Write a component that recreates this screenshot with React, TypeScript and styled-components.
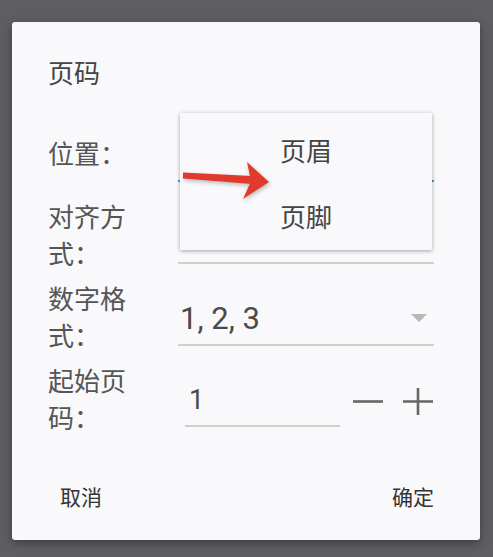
import React from 'react';
import styled, { createGlobalStyle } from 'styled-components';

const GlobalStyle = createGlobalStyle`
  html, body {
    margin: 0;
    padding: 0;
    background: #5e5d60;
  }
  body {
    font-family: "Roboto", "Noto Sans CJK SC", sans-serif;
  }
`;

const Screen = styled.div`
  width: 493px;
  height: 557px;
  box-sizing: border-box;
  padding: 22px 13px 17px 12px;
  background: #5e5d60;
`;

const Dialog = styled.div`
  position: relative;
  width: 468px;
  height: 518px;
  box-sizing: border-box;
  padding: 34px 46px 0 36px;
  background: #f9f8fa;
  border-radius: 3px;
  box-shadow: 0 3px 8px rgba(0, 0, 0, .35);
`;

const Title = styled.h2`
  margin: 0 0 22px;
  font-size: 26px;
  font-weight: 400;
  line-height: 36px;
  color: #444;
`;

const Form = styled.div`
  display: grid;
  grid-template-columns: 130px 1fr;
  grid-auto-rows: 82px;
`;

const Label = styled.div`
  align-self: center;
  width: 90px;
  font-size: 26px;
  line-height: 37px;
  color: #555;
`;

const Field = styled.div<{ focused?: boolean }>`
  align-self: center;
  display: flex;
  align-items: center;
  height: 52px;
  border-bottom: 2px solid ${(props) => (props.focused ? '#2aa7c8' : '#cfcfcf')};
`;

const Value = styled.span`
  flex: 1;
  padding-left: 2px;
  font-size: 31px;
  color: #4a4a4a;
`;

const Caret = styled.span`
  margin-right: 7px;
  border-left: 8.5px solid transparent;
  border-right: 8.5px solid transparent;
  border-top: 8px solid #b8b8b8;
`;

const Stepper = styled.div`
  align-self: center;
  display: flex;
  align-items: center;
  padding-left: 7px;
`;

const NumberInput = styled.div`
  display: flex;
  align-items: center;
  width: 155px;
  height: 52px;
  padding-left: 4px;
  box-sizing: border-box;
  border-bottom: 2px solid #cfcfcf;
  font-size: 27px;
  color: #4a4a4a;
`;

const StepButton = styled.button<{ gap: number }>`
  display: flex;
  margin-left: ${(props) => props.gap}px;
  padding: 0;
  border: 0;
  background: none;
  cursor: pointer;
`;

const Actions = styled.div`
  display: flex;
  justify-content: space-between;
  margin: 30px -12px 0 0;
`;

const ActionButton = styled.button`
  height: 48px;
  padding: 0 12px;
  border: 0;
  background: none;
  font-family: "Noto Sans CJK SC", sans-serif;
  font-size: 21px;
  color: #333;
`;

const Menu = styled.ul`
  position: absolute;
  left: 168px;
  top: 91px;
  width: 252px;
  margin: 0;
  padding: 3px 0 2px;
  list-style: none;
  background: #f9f8fa;
  box-shadow: 0 1px 4px rgba(0, 0, 0, .35);
`;

const MenuItem = styled.li`
  display: flex;
  align-items: center;
  justify-content: center;
  height: 66px;
  font-size: 26px;
  color: #444;
`;

const Arrow = styled.svg`
  position: absolute;
  left: 164px;
  top: 134px;
  filter: drop-shadow(1px 2px 2px rgba(0, 0, 0, .25));
`;

const Minus = () => (
  <svg width="30" height="30" viewBox="0 0 30 30">
    <path d="M0 15.5h30" stroke="#666" strokeWidth="2.6" />
  </svg>
);

const Plus = () => (
  <svg width="30" height="30" viewBox="0 0 30 30">
    <path d="M0 15.5h30M15 2v27" stroke="#666" strokeWidth="2.6" />
  </svg>
);

export default function App() {
  return (
    <>
      <GlobalStyle />
      <Screen>
        <Dialog>
          <Title>页码</Title>
          <Form>
            <Label>位置：</Label>
            <Field focused />
            <Label>对齐方式：</Label>
            <Field />
            <Label>数字格式：</Label>
            <Field>
              <Value>1, 2, 3</Value>
              <Caret />
            </Field>
            <Label>起始页码：</Label>
            <Stepper>
              <NumberInput>1</NumberInput>
              <StepButton gap={13}><Minus /></StepButton>
              <StepButton gap={20}><Plus /></StepButton>
            </Stepper>
          </Form>
          <Actions>
            <ActionButton>取消</ActionButton>
            <ActionButton>确定</ActionButton>
          </Actions>
          <Menu>
            <MenuItem>页眉</MenuItem>
            <MenuItem>页脚</MenuItem>
          </Menu>
          <Arrow width="100" height="48" viewBox="0 0 100 48">
            <polygon points="7,16.5 76,20 76,28 7,22.5" fill="#e03a2d" />
            <polygon points="71,6 93,26 67,43 75,25" fill="#e03a2d" />
          </Arrow>
        </Dialog>
      </Screen>
    </>
  );
}
